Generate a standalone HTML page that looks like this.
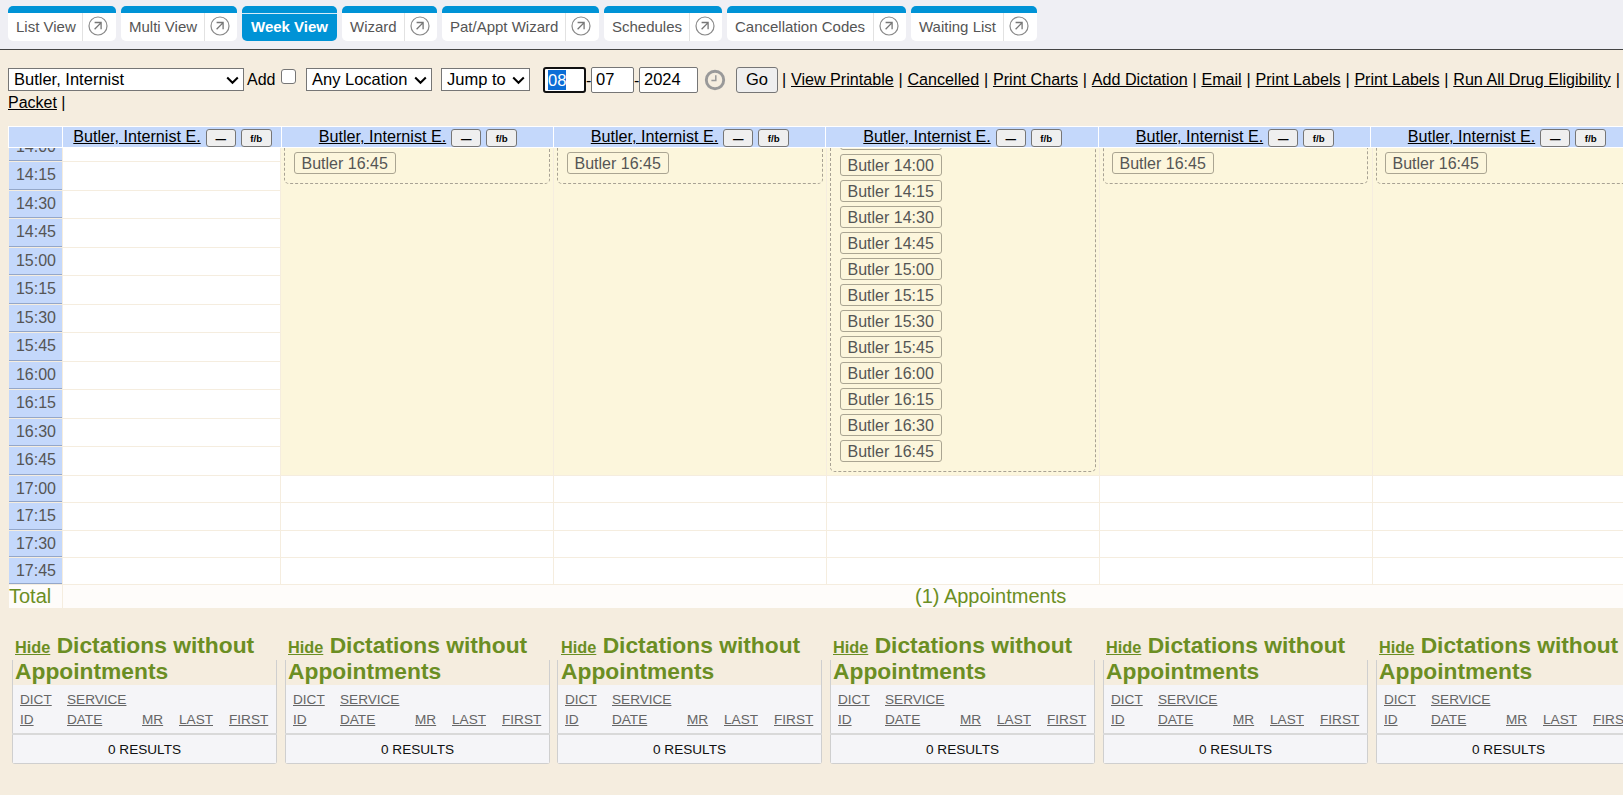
<!DOCTYPE html>
<html><head><meta charset="utf-8"><title>Week View</title>
<style>
*{box-sizing:border-box}
html,body{margin:0;padding:0}
body{width:1623px;height:795px;overflow:hidden;position:relative;background:#f5eddf;font-family:"Liberation Sans", sans-serif;font-size:16px;color:#000}
.abs{position:absolute}
.top{position:absolute;left:0;top:0;width:1623px;height:50px;background:#efeff4;border-bottom:1px solid #444}
.tab{position:absolute;top:6px;height:35px;border-top:7px solid #0093d6;border-radius:5px;background:#fff;display:flex;font-size:15px;color:#555;line-height:28px;white-space:nowrap}
.tab .lbl{padding:0 7px 0 8px}
.tab .ico{border-left:1px solid #e2e2e2;width:33px;position:relative}
.tab .ico svg{position:absolute;top:3.4px}
.tab.act{background:#0093d6;color:#fff;font-weight:bold;}
.tab.act .lbl{padding:0 8px 0 9px;border-top:1px solid #d6ecf8;line-height:25px}
.sel{position:absolute;top:68px;height:23px;background:#fff;border:1px solid #767676;border-radius:0;font-size:16.5px;line-height:21px;padding-left:5px;white-space:nowrap}
.sel svg{position:absolute;top:7px}
.inp{position:absolute;top:67px;height:26px;background:#fff;border:1px solid #767676;border-radius:2px;font-size:16.5px;line-height:22px;padding-left:4px}
.lnk{text-decoration:underline;margin:0 0.33px}
.hdr{position:absolute;top:127px;height:20px;background:#c4d8fb;display:flex;justify-content:center;align-items:flex-start;white-space:nowrap;padding-left:1px}
.hdr .nm{font-size:16.15px;line-height:18px;text-decoration:underline;margin-top:0px}
.btn{display:inline-block;height:18px;margin-top:2px;border:1px solid #767676;border-radius:3px;background:#efefef;font-size:10.5px;font-weight:bold;text-align:center;line-height:16px}
.tc{position:absolute;left:9px;width:53px;background:#c4d8fb;border-bottom:1px solid #94a7c9;font-size:16px;color:#555;text-align:right;padding-right:6px}
.wc{position:absolute;background:#fff}
.yc{position:absolute;background:#fcf6dc}
.dbox{position:absolute;border:1px dashed #a8a294;border-radius:5px}
.ab{position:absolute;height:22px;border:1px solid #aaa592;border-radius:3px;font-size:16px;color:#555;line-height:22px;padding:0 7.5px 0 6.5px;white-space:nowrap}
.pnl{position:absolute;top:660px;width:265px;height:104px;border:1px solid #cfcfcf;border-top:none;border-radius:0 0 3px 3px}
.pg{position:absolute;left:0;right:0;top:25px;bottom:0;background:#f5f5f8}
.h2{position:absolute;top:633px;width:270px;font-weight:bold;font-size:22.8px;line-height:25.5px;color:#6b8e23;white-space:nowrap}
.h2 .hide{font-size:16.3px;text-decoration:underline;line-height:10px}
.ch{position:absolute;font-size:13.6px;color:#666;text-decoration:underline;line-height:20px;white-space:nowrap}
</style></head><body>

<div class="top"></div>
<div class="tab" style="left:8px;width:108px"><div class="lbl" style="width:74px">List View</div><div class="ico" style="width:34px"><svg style="left:5.3px" width="20" height="20" viewBox="0 0 20 20"><circle cx="10" cy="10" r="9" fill="none" stroke="#8a8a8a" stroke-width="1.2"/><path d="M6.6 6.5 H13.1 V13.2 M6.6 13.3 L12.9 6.9" fill="none" stroke="#777" stroke-width="1.3"/></svg></div></div>
<div class="tab" style="left:121px;width:116px"><div class="lbl" style="width:83px">Multi View</div><div class="ico" style="width:33px"><svg style="left:5.3px" width="20" height="20" viewBox="0 0 20 20"><circle cx="10" cy="10" r="9" fill="none" stroke="#8a8a8a" stroke-width="1.2"/><path d="M6.6 6.5 H13.1 V13.2 M6.6 13.3 L12.9 6.9" fill="none" stroke="#777" stroke-width="1.3"/></svg></div></div>
<div class="tab act" style="left:242px;width:95px"><div class="lbl" style="width:100%;text-align:center;padding:0">Week View</div></div>
<div class="tab" style="left:342px;width:95px"><div class="lbl" style="width:62px">Wizard</div><div class="ico" style="width:33px"><svg style="left:5.3px" width="20" height="20" viewBox="0 0 20 20"><circle cx="10" cy="10" r="9" fill="none" stroke="#8a8a8a" stroke-width="1.2"/><path d="M6.6 6.5 H13.1 V13.2 M6.6 13.3 L12.9 6.9" fill="none" stroke="#777" stroke-width="1.3"/></svg></div></div>
<div class="tab" style="left:442px;width:157px"><div class="lbl" style="width:123px">Pat/Appt Wizard</div><div class="ico" style="width:34px"><svg style="left:5.3px" width="20" height="20" viewBox="0 0 20 20"><circle cx="10" cy="10" r="9" fill="none" stroke="#8a8a8a" stroke-width="1.2"/><path d="M6.6 6.5 H13.1 V13.2 M6.6 13.3 L12.9 6.9" fill="none" stroke="#777" stroke-width="1.3"/></svg></div></div>
<div class="tab" style="left:604px;width:118px"><div class="lbl" style="width:85px">Schedules</div><div class="ico" style="width:33px"><svg style="left:5.3px" width="20" height="20" viewBox="0 0 20 20"><circle cx="10" cy="10" r="9" fill="none" stroke="#8a8a8a" stroke-width="1.2"/><path d="M6.6 6.5 H13.1 V13.2 M6.6 13.3 L12.9 6.9" fill="none" stroke="#777" stroke-width="1.3"/></svg></div></div>
<div class="tab" style="left:727px;width:179px"><div class="lbl" style="width:146px">Cancellation Codes</div><div class="ico" style="width:33px"><svg style="left:5.3px" width="20" height="20" viewBox="0 0 20 20"><circle cx="10" cy="10" r="9" fill="none" stroke="#8a8a8a" stroke-width="1.2"/><path d="M6.6 6.5 H13.1 V13.2 M6.6 13.3 L12.9 6.9" fill="none" stroke="#777" stroke-width="1.3"/></svg></div></div>
<div class="tab" style="left:911px;width:126px"><div class="lbl" style="width:92px">Waiting List</div><div class="ico" style="width:34px"><svg style="left:5.3px" width="20" height="20" viewBox="0 0 20 20"><circle cx="10" cy="10" r="9" fill="none" stroke="#8a8a8a" stroke-width="1.2"/><path d="M6.6 6.5 H13.1 V13.2 M6.6 13.3 L12.9 6.9" fill="none" stroke="#777" stroke-width="1.3"/></svg></div></div>
<div class="sel" style="left:8px;width:236px">Butler, Internist<span style="position:absolute;left:217px;top:0"><svg width="13" height="9" viewBox="0 0 13 9"><path d="M1.2 1.5 L6.5 6.8 L11.8 1.5" fill="none" stroke="#000" stroke-width="2"/></svg></span></div>
<div class="abs" style="left:247px;top:68px;line-height:23px">Add</div>
<div class="abs" style="left:281px;top:69px;width:15px;height:15px;border:1px solid #767676;border-radius:3px;background:#fff"></div>
<div class="sel" style="left:306px;width:126px">Any Location<span style="position:absolute;left:107px;top:0"><svg width="13" height="9" viewBox="0 0 13 9"><path d="M1.2 1.5 L6.5 6.8 L11.8 1.5" fill="none" stroke="#000" stroke-width="2"/></svg></span></div>
<div class="sel" style="left:441px;width:89px">Jump to<span style="position:absolute;left:70px;top:0"><svg width="13" height="9" viewBox="0 0 13 9"><path d="M1.2 1.5 L6.5 6.8 L11.8 1.5" fill="none" stroke="#000" stroke-width="2"/></svg></span></div>
<div class="inp" style="left:543px;width:43px;border:2px solid #101010;border-radius:3px;padding-left:3px"><span style="background:#0b6dd6;color:#fff;display:inline-block;line-height:20px;margin-top:1px;vertical-align:top">08</span></div>
<div class="abs" style="left:586px;top:68px;line-height:26px;font-size:16px">-</div>
<div class="inp" style="left:591px;width:43px">07</div>
<div class="abs" style="left:634px;top:68px;line-height:26px;font-size:16px">-</div>
<div class="inp" style="left:639px;width:59px">2024</div>
<svg class="abs" style="left:704px;top:69px" width="22" height="22" viewBox="0 0 22 22"><circle cx="11" cy="11" r="8.7" fill="none" stroke="#999" stroke-width="2.9"/><path d="M11.8 6.2 V11.5 H7.4" fill="none" stroke="#999" stroke-width="1.5"/></svg>
<div class="abs" style="left:736px;top:67px;width:42px;height:26px;border:1px solid #767676;border-radius:3px;background:#efefef;text-align:center;line-height:22px;font-size:16.5px">Go</div>
<div class="abs" style="left:782px;top:68px;line-height:23px;white-space:nowrap;font-size:16.12px">| <span class="lnk">View Printable</span> | <span class="lnk">Cancelled</span> | <span class="lnk">Print Charts</span> | <span class="lnk">Add Dictation</span> | <span class="lnk">Email</span> | <span class="lnk">Print Labels</span> | <span class="lnk">Print Labels</span> | <span class="lnk">Run All Drug Eligibility</span> |</div>
<div class="abs" style="left:8px;top:91px;line-height:23px;white-space:nowrap"><span style="text-decoration:underline">Packet</span> |</div>
<div class="abs" style="left:0;top:148px;width:1623px;height:437px;overflow:hidden">
<div class="tc" style="top:-14px;height:27px;line-height:18px;padding-top:4px">14:00</div>
<div class="wc" style="left:63px;width:217px;top:-14px;height:27px"></div>
<div class="tc" style="top:14px;height:28px;line-height:18px;padding-top:4px">14:15</div>
<div class="wc" style="left:63px;width:217px;top:14px;height:28px"></div>
<div class="tc" style="top:43px;height:27px;line-height:18px;padding-top:4px">14:30</div>
<div class="wc" style="left:63px;width:217px;top:43px;height:27px"></div>
<div class="tc" style="top:71px;height:28px;line-height:18px;padding-top:4px">14:45</div>
<div class="wc" style="left:63px;width:217px;top:71px;height:28px"></div>
<div class="tc" style="top:100px;height:27px;line-height:18px;padding-top:4px">15:00</div>
<div class="wc" style="left:63px;width:217px;top:100px;height:27px"></div>
<div class="tc" style="top:128px;height:28px;line-height:18px;padding-top:4px">15:15</div>
<div class="wc" style="left:63px;width:217px;top:128px;height:28px"></div>
<div class="tc" style="top:157px;height:27px;line-height:18px;padding-top:4px">15:30</div>
<div class="wc" style="left:63px;width:217px;top:157px;height:27px"></div>
<div class="tc" style="top:185px;height:28px;line-height:18px;padding-top:4px">15:45</div>
<div class="wc" style="left:63px;width:217px;top:185px;height:28px"></div>
<div class="tc" style="top:214px;height:27px;line-height:18px;padding-top:4px">16:00</div>
<div class="wc" style="left:63px;width:217px;top:214px;height:27px"></div>
<div class="tc" style="top:242px;height:28px;line-height:18px;padding-top:4px">16:15</div>
<div class="wc" style="left:63px;width:217px;top:242px;height:28px"></div>
<div class="tc" style="top:271px;height:27px;line-height:18px;padding-top:4px">16:30</div>
<div class="wc" style="left:63px;width:217px;top:271px;height:27px"></div>
<div class="tc" style="top:299px;height:28px;line-height:18px;padding-top:4px">16:45</div>
<div class="wc" style="left:63px;width:217px;top:299px;height:28px"></div>
<div class="tc" style="top:328px;height:26px;line-height:18px;padding-top:4px">17:00</div>
<div class="wc" style="left:63px;width:217px;top:328px;height:26px"></div>
<div class="wc" style="left:281px;width:272px;top:328px;height:26px"></div>
<div class="wc" style="left:554px;width:272px;top:328px;height:26px"></div>
<div class="wc" style="left:827px;width:272px;top:328px;height:26px"></div>
<div class="wc" style="left:1100px;width:272px;top:328px;height:26px"></div>
<div class="wc" style="left:1373px;width:328px;top:328px;height:26px"></div>
<div class="tc" style="top:355px;height:27px;line-height:18px;padding-top:4px">17:15</div>
<div class="wc" style="left:63px;width:217px;top:355px;height:27px"></div>
<div class="wc" style="left:281px;width:272px;top:355px;height:27px"></div>
<div class="wc" style="left:554px;width:272px;top:355px;height:27px"></div>
<div class="wc" style="left:827px;width:272px;top:355px;height:27px"></div>
<div class="wc" style="left:1100px;width:272px;top:355px;height:27px"></div>
<div class="wc" style="left:1373px;width:328px;top:355px;height:27px"></div>
<div class="tc" style="top:383px;height:26px;line-height:18px;padding-top:4px">17:30</div>
<div class="wc" style="left:63px;width:217px;top:383px;height:26px"></div>
<div class="wc" style="left:281px;width:272px;top:383px;height:26px"></div>
<div class="wc" style="left:554px;width:272px;top:383px;height:26px"></div>
<div class="wc" style="left:827px;width:272px;top:383px;height:26px"></div>
<div class="wc" style="left:1100px;width:272px;top:383px;height:26px"></div>
<div class="wc" style="left:1373px;width:328px;top:383px;height:26px"></div>
<div class="tc" style="top:410px;height:26px;line-height:18px;padding-top:4px">17:45</div>
<div class="wc" style="left:63px;width:217px;top:410px;height:26px"></div>
<div class="wc" style="left:281px;width:272px;top:410px;height:26px"></div>
<div class="wc" style="left:554px;width:272px;top:410px;height:26px"></div>
<div class="wc" style="left:827px;width:272px;top:410px;height:26px"></div>
<div class="wc" style="left:1100px;width:272px;top:410px;height:26px"></div>
<div class="wc" style="left:1373px;width:328px;top:410px;height:26px"></div>
<div class="yc" style="left:281px;width:272px;top:0;height:327px"></div>
<div class="yc" style="left:554px;width:272px;top:0;height:327px"></div>
<div class="yc" style="left:827px;width:272px;top:0;height:327px"></div>
<div class="yc" style="left:1100px;width:272px;top:0;height:327px"></div>
<div class="yc" style="left:1373px;width:328px;top:0;height:327px"></div>
<div class="dbox" style="left:284px;top:-100px;width:266px;height:136px"></div>
<div class="ab" style="left:294px;top:4px">Butler 16:45</div>
<div class="dbox" style="left:557px;top:-100px;width:266px;height:136px"></div>
<div class="ab" style="left:567px;top:4px">Butler 16:45</div>
<div class="dbox" style="left:830px;top:-100px;width:266px;height:424px"></div>
<div class="dbox" style="left:1103px;top:-100px;width:265px;height:136px"></div>
<div class="ab" style="left:1112px;top:4px">Butler 16:45</div>
<div class="dbox" style="left:1376px;top:-100px;width:266px;height:136px"></div>
<div class="ab" style="left:1385px;top:4px">Butler 16:45</div>
<div class="ab" style="left:840px;top:-20px">Butler 13:45</div>
<div class="ab" style="left:840px;top:6px">Butler 14:00</div>
<div class="ab" style="left:840px;top:32px">Butler 14:15</div>
<div class="ab" style="left:840px;top:58px">Butler 14:30</div>
<div class="ab" style="left:840px;top:84px">Butler 14:45</div>
<div class="ab" style="left:840px;top:110px">Butler 15:00</div>
<div class="ab" style="left:840px;top:136px">Butler 15:15</div>
<div class="ab" style="left:840px;top:162px">Butler 15:30</div>
<div class="ab" style="left:840px;top:188px">Butler 15:45</div>
<div class="ab" style="left:840px;top:214px">Butler 16:00</div>
<div class="ab" style="left:840px;top:240px">Butler 16:15</div>
<div class="ab" style="left:840px;top:266px">Butler 16:30</div>
<div class="ab" style="left:840px;top:292px">Butler 16:45</div>
</div>
<div class="abs" style="left:8px;top:126px;width:1615px;height:22px;background:#fff"></div>
<div class="hdr" style="left:9px;width:53px"></div>
<div class="hdr" style="left:63px;width:218px"><span class="nm">Butler, Internist E.</span><span class="btn" style="width:30px;margin-left:5px;font-weight:bold;line-height:18px">&mdash;</span><span class="btn" style="width:31px;margin-left:5px;font-size:9.7px;line-height:18px">f/b</span></div>
<div class="hdr" style="left:282px;width:271px"><span class="nm">Butler, Internist E.</span><span class="btn" style="width:30px;margin-left:5px;font-weight:bold;line-height:18px">&mdash;</span><span class="btn" style="width:31px;margin-left:5px;font-size:9.7px;line-height:18px">f/b</span></div>
<div class="hdr" style="left:554px;width:271px"><span class="nm">Butler, Internist E.</span><span class="btn" style="width:30px;margin-left:5px;font-weight:bold;line-height:18px">&mdash;</span><span class="btn" style="width:31px;margin-left:5px;font-size:9.7px;line-height:18px">f/b</span></div>
<div class="hdr" style="left:826px;width:272px"><span class="nm">Butler, Internist E.</span><span class="btn" style="width:30px;margin-left:5px;font-weight:bold;line-height:18px">&mdash;</span><span class="btn" style="width:31px;margin-left:5px;font-size:9.7px;line-height:18px">f/b</span></div>
<div class="hdr" style="left:1099px;width:271px"><span class="nm">Butler, Internist E.</span><span class="btn" style="width:30px;margin-left:5px;font-weight:bold;line-height:18px">&mdash;</span><span class="btn" style="width:31px;margin-left:5px;font-size:9.7px;line-height:18px">f/b</span></div>
<div class="hdr" style="left:1371px;width:271px"><span class="nm">Butler, Internist E.</span><span class="btn" style="width:30px;margin-left:5px;font-weight:bold;line-height:18px">&mdash;</span><span class="btn" style="width:31px;margin-left:5px;font-size:9.7px;line-height:18px">f/b</span></div>
<div class="abs" style="left:9px;top:585px;width:53px;height:23px;background:#fefcfa;color:#6b8e23;font-size:20px;line-height:23px">Total</div>
<div class="abs" style="left:63px;top:585px;width:1560px;height:23px;background:#fefcfa;color:#6b8e23;font-size:20px;line-height:23px"><span style="position:absolute;left:852px">(1) Appointments</span></div>
<div class="pnl" style="left:12px"><div class="pg"></div></div>
<div class="abs" style="left:12px;top:733px;width:265px;height:2px;background:#d9d9d9"></div>
<div class="h2" style="left:15px"><span class="hide">Hide</span> Dictations without<br>Appointments</div>
<div class="ch" style="left:20px;top:690px">DICT</div>
<div class="ch" style="left:67px;top:690px">SERVICE</div>
<div class="ch" style="left:20px;top:710px">ID</div>
<div class="ch" style="left:67px;top:710px">DATE</div>
<div class="ch" style="left:142px;top:710px">MR</div>
<div class="ch" style="left:179px;top:710px">LAST</div>
<div class="ch" style="left:229px;top:710px">FIRST</div>
<div class="abs" style="left:12px;top:740px;width:265px;text-align:center;font-size:13.6px;line-height:20px;color:#111">0 RESULTS</div>
<div class="pnl" style="left:285px"><div class="pg"></div></div>
<div class="abs" style="left:285px;top:733px;width:265px;height:2px;background:#d9d9d9"></div>
<div class="h2" style="left:288px"><span class="hide">Hide</span> Dictations without<br>Appointments</div>
<div class="ch" style="left:293px;top:690px">DICT</div>
<div class="ch" style="left:340px;top:690px">SERVICE</div>
<div class="ch" style="left:293px;top:710px">ID</div>
<div class="ch" style="left:340px;top:710px">DATE</div>
<div class="ch" style="left:415px;top:710px">MR</div>
<div class="ch" style="left:452px;top:710px">LAST</div>
<div class="ch" style="left:502px;top:710px">FIRST</div>
<div class="abs" style="left:285px;top:740px;width:265px;text-align:center;font-size:13.6px;line-height:20px;color:#111">0 RESULTS</div>
<div class="pnl" style="left:557px"><div class="pg"></div></div>
<div class="abs" style="left:557px;top:733px;width:265px;height:2px;background:#d9d9d9"></div>
<div class="h2" style="left:561px"><span class="hide">Hide</span> Dictations without<br>Appointments</div>
<div class="ch" style="left:565px;top:690px">DICT</div>
<div class="ch" style="left:612px;top:690px">SERVICE</div>
<div class="ch" style="left:565px;top:710px">ID</div>
<div class="ch" style="left:612px;top:710px">DATE</div>
<div class="ch" style="left:687px;top:710px">MR</div>
<div class="ch" style="left:724px;top:710px">LAST</div>
<div class="ch" style="left:774px;top:710px">FIRST</div>
<div class="abs" style="left:557px;top:740px;width:265px;text-align:center;font-size:13.6px;line-height:20px;color:#111">0 RESULTS</div>
<div class="pnl" style="left:830px"><div class="pg"></div></div>
<div class="abs" style="left:830px;top:733px;width:265px;height:2px;background:#d9d9d9"></div>
<div class="h2" style="left:833px"><span class="hide">Hide</span> Dictations without<br>Appointments</div>
<div class="ch" style="left:838px;top:690px">DICT</div>
<div class="ch" style="left:885px;top:690px">SERVICE</div>
<div class="ch" style="left:838px;top:710px">ID</div>
<div class="ch" style="left:885px;top:710px">DATE</div>
<div class="ch" style="left:960px;top:710px">MR</div>
<div class="ch" style="left:997px;top:710px">LAST</div>
<div class="ch" style="left:1047px;top:710px">FIRST</div>
<div class="abs" style="left:830px;top:740px;width:265px;text-align:center;font-size:13.6px;line-height:20px;color:#111">0 RESULTS</div>
<div class="pnl" style="left:1103px"><div class="pg"></div></div>
<div class="abs" style="left:1103px;top:733px;width:265px;height:2px;background:#d9d9d9"></div>
<div class="h2" style="left:1106px"><span class="hide">Hide</span> Dictations without<br>Appointments</div>
<div class="ch" style="left:1111px;top:690px">DICT</div>
<div class="ch" style="left:1158px;top:690px">SERVICE</div>
<div class="ch" style="left:1111px;top:710px">ID</div>
<div class="ch" style="left:1158px;top:710px">DATE</div>
<div class="ch" style="left:1233px;top:710px">MR</div>
<div class="ch" style="left:1270px;top:710px">LAST</div>
<div class="ch" style="left:1320px;top:710px">FIRST</div>
<div class="abs" style="left:1103px;top:740px;width:265px;text-align:center;font-size:13.6px;line-height:20px;color:#111">0 RESULTS</div>
<div class="pnl" style="left:1376px"><div class="pg"></div></div>
<div class="abs" style="left:1376px;top:733px;width:265px;height:2px;background:#d9d9d9"></div>
<div class="h2" style="left:1379px"><span class="hide">Hide</span> Dictations without<br>Appointments</div>
<div class="ch" style="left:1384px;top:690px">DICT</div>
<div class="ch" style="left:1431px;top:690px">SERVICE</div>
<div class="ch" style="left:1384px;top:710px">ID</div>
<div class="ch" style="left:1431px;top:710px">DATE</div>
<div class="ch" style="left:1506px;top:710px">MR</div>
<div class="ch" style="left:1543px;top:710px">LAST</div>
<div class="ch" style="left:1593px;top:710px">FIRST</div>
<div class="abs" style="left:1376px;top:740px;width:265px;text-align:center;font-size:13.6px;line-height:20px;color:#111">0 RESULTS</div>
</body></html>
